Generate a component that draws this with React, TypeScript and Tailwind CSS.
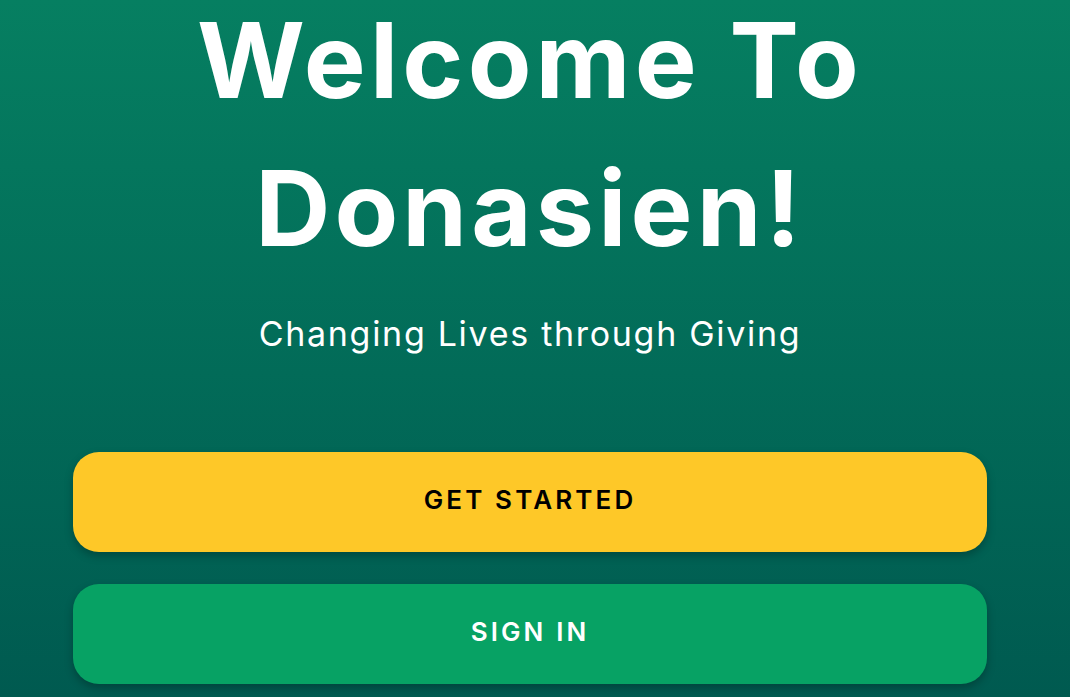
import React from "react";

const ActionButton = ({ label, className }: { label: string; className: string }) => {
  return (
    <button
      className={`w-full h-[100px] pb-[6px] rounded-[26px] shadow-[0_4px_8px_rgba(0,0,0,0.25)] text-[26px] font-semibold uppercase tracking-[0.12em] ${className}`}
    >
      {label}
    </button>
  );
};

export default function App() {
  return (
    <div
      className="h-[697px] w-full overflow-hidden bg-gradient-to-b from-[#067f61] to-[#005a50] flex flex-col justify-end items-center pl-[73px] pr-[83px] pb-[13px]"
      style={{ fontFamily: "Inter, 'Open Sans', sans-serif" }}
    >
      <h1 className="shrink-0 text-white text-center font-bold text-[104px] leading-[112px] tracking-[0.04em] whitespace-nowrap">
        <span className="block">Welcome To</span>
        <span className="block mt-[36px]">Donasien!</span>
      </h1>
      <p className="text-white text-[34px] leading-[40px] tracking-[0.05em] mt-[50px] mb-[98px]">
        Changing Lives through Giving
      </p>
      <div className="w-full flex flex-col gap-[32px]">
        <ActionButton label="Get Started" className="bg-[#fec828] text-black" />
        <ActionButton label="Sign In" className="bg-[#07a264] text-white" />
      </div>
    </div>
  );
}
